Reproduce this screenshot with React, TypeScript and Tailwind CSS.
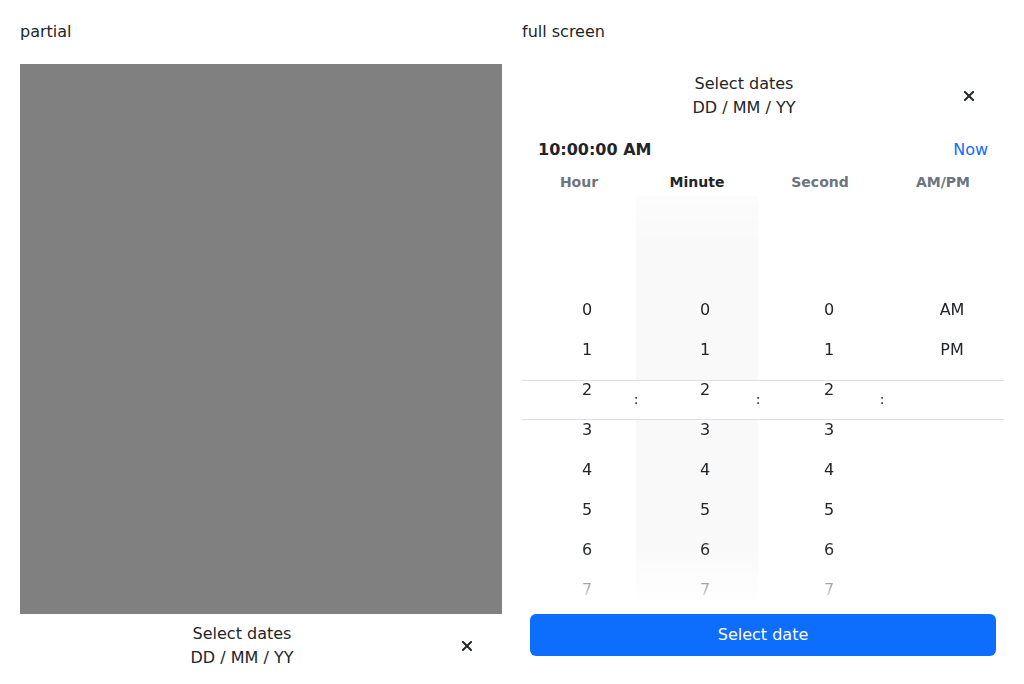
import React from 'react';

const hours = ['0', '1', '2', '3', '4', '5', '6', '7'];
const ampm = ['AM', 'PM'];

function CloseIcon() {
  return (
    <svg width="10" height="10" viewBox="0 0 10 10" className="-ml-0.5">
      <path d="M1 1L9 9M9 1L1 9" stroke="#212529" strokeWidth="2" strokeLinecap="square" />
    </svg>
  );
}

function DialogHeader({ className }: { className: string }) {
  return (
    <div className={`flex items-center shrink-0 ${className}`}>
      <div className="flex-1 text-center text-base leading-6 text-[#212529]">
        <div>Select dates</div>
        <div>DD / MM / YY</div>
      </div>
      <button type="button" className="w-[38px] h-[38px] flex items-center justify-start">
        <CloseIcon />
      </button>
    </div>
  );
}

function WheelColumn({ items, width, pad, active }: { items: string[]; width: string; pad: string; active?: boolean }) {
  return (
    <div className={`${width} ${active ? 'bg-[#f9f9f9]' : ''} pt-[94px]`}>
      {items.map((v) => (
        <div key={v} className={`relative z-20 h-10 flex items-center justify-center ${pad} text-base text-[#212529]`}>
          {v}
        </div>
      ))}
    </div>
  );
}

export default function App() {
  return (
    <div className="w-[1024px] min-h-[684px] bg-white p-5 flex items-start gap-5 font-['DejaVu_Sans',sans-serif] text-[#212529]">
      {/* partial */}
      <div className="w-[482px] flex flex-col">
        <div className="h-6 leading-6 text-base mb-5">partial</div>
        <div className="h-[550px] shrink-0 bg-[#808080]" />
        <DialogHeader className="pt-2 pb-[7px]" />
      </div>

      {/* full screen */}
      <div className="w-[482px] flex flex-col">
        <div className="h-6 leading-6 text-base mb-5">full screen</div>
        <DialogHeader className="pt-2 pb-[7px]" />
        <div className="flex items-center justify-between px-4 pt-[11px] pb-[10px] leading-6">
          <span className="font-bold text-base">10:00:00 AM</span>
          <button type="button" className="text-base text-[#0d6efd]">Now</button>
        </div>
        <div className="flex text-sm font-bold leading-5 text-[#6c757d]">
          <div className="w-[114px] text-center">Hour</div>
          <div className="w-[122px] text-center text-[#212529]">Minute</div>
          <div className="w-[124px] text-center">Second</div>
          <div className="w-[122px] text-center">AM/PM</div>
        </div>
        <div className="relative mt-1 h-[408px] shrink-0 overflow-hidden [mask-image:linear-gradient(to_bottom,rgba(0,0,0,0.5)_0%,black_12%,black_86%,rgba(0,0,0,0.35)_96%,transparent_100%)]">
          <div className="absolute left-0 right-0 top-[184px] h-10 z-10 bg-white border-y border-[#dee2e6]">
            <span className="absolute left-[114px] top-[8px] -translate-x-1/2 text-sm">:</span>
            <span className="absolute left-[236px] top-[8px] -translate-x-1/2 text-sm">:</span>
            <span className="absolute left-[360px] top-[8px] -translate-x-1/2 text-sm">:</span>
          </div>
          <div className="flex h-full">
            <WheelColumn items={hours} width="w-[114px]" pad="pl-4" />
            <WheelColumn items={hours} width="w-[122px]" pad="pl-4" active />
            <WheelColumn items={hours} width="w-[124px]" pad="pl-[18px]" />
            <WheelColumn items={ampm} width="w-[122px]" pad="pl-[18px]" />
          </div>
        </div>
        <button
          type="button"
          className="mx-2 mt-[10px] h-[42px] shrink-0 rounded-md bg-[#0d6efd] text-white text-base"
        >
          Select date
        </button>
      </div>
    </div>
  );
}
